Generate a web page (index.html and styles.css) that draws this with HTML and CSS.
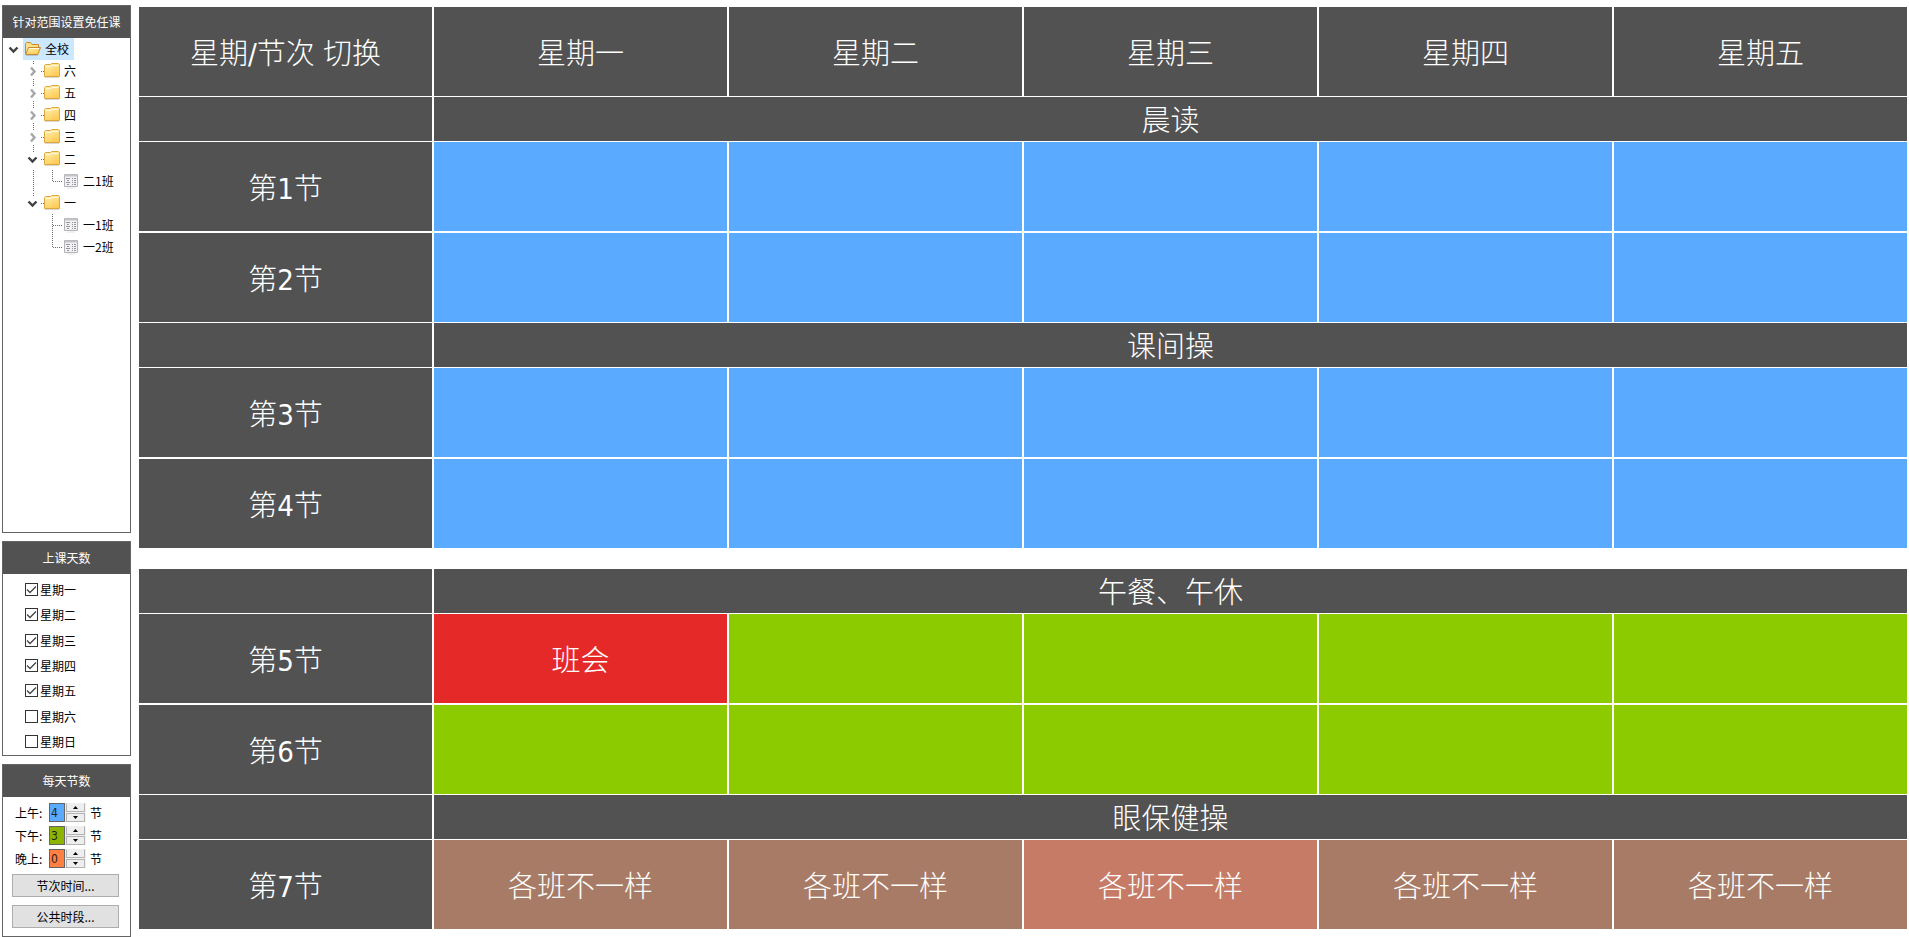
FILE: index.html
```html
<!DOCTYPE html>
<html lang="zh-CN">
<head>
<meta charset="utf-8">
<title>针对范围设置免任课</title>
<link rel="stylesheet" href="styles.css">
</head>
<body>
<svg width="0" height="0" class="defs" aria-hidden="true">
  <defs>
    <linearGradient id="gold" x1="0" y1="0" x2="0.6" y2="1">
      <stop offset="0" stop-color="#fff2b4"/><stop offset="1" stop-color="#ffcb55"/>
    </linearGradient>
    <symbol id="folder" viewBox="0 0 16 16">
      <path d="M.5 13.5V2.5L1.500 1.500H6.500L7.500 .5H14.500L15.500 1.500V13.500Z" fill="url(#gold)" stroke="#dfa83e"/>
      <path d="M1.500 3.500H7L8 2.500H14.500" fill="none" stroke="#fffbe0"/>
      <path d="M1 14.500H15" stroke="#d8d8d8"/>
    </symbol>
    <symbol id="folder-open" viewBox="0 0 16 16">
      <path d="M.5 13V2.500L1.500 1.500H5.500L7 3.500H13.500V6.500" fill="#fbe08a" stroke="#c98b2b"/>
      <path d="M.8 13.500L3.500 6.500H15.500L12.800 13.500Z" fill="url(#gold)" stroke="#c98b2b"/>
      <path d="M4.200 7.500H14" stroke="#fffbe0"/>
      <path d="M1 14.500H13" stroke="#b3c6d8"/>
    </symbol>
    <symbol id="sheet" viewBox="0 0 14 16">
      <path d="M.5 1.500H13.500V13.500H.5Z" fill="#f1f1f3" stroke="#b4b4b8"/>
      <path d="M1 2.500H13" stroke="#c4c4c8" stroke-width="2"/>
      <path d="M2 5.500H6M3 7.500H5M2 9.500H6M3 11.500H5M8 5.500H9M10 5.500H12M8 7.500H9M10 7.500H12M8 9.500H9M10 9.500H12M8 11.500H9M10 11.500H12" stroke="#96969c"/>
      <path d="M3 15H11" stroke="#e2e2e2"/>
    </symbol>
    <symbol id="g-shut" viewBox="0 0 41 22">
      <path d="M28 7.500L31.500 11.500L28 15.500" fill="none" stroke="#a6a6a6" stroke-width="2.400"/>
      <path d="M30.500 1V4M30.500 19V22M38 11.500H41" class="dots"/>
    </symbol>
    <symbol id="g-open" viewBox="0 0 41 22">
      <path d="M25.500 9.500L29.500 13.500L33.500 9.500" fill="none" stroke="#404040" stroke-width="2.400"/>
      <path d="M30.500 1V4M38 11.500H41" class="dots"/>
    </symbol>
    <symbol id="g-mid" viewBox="0 0 61 22">
      <path d="M49.500 0V22M50 11.500H60" class="dots"/>
    </symbol>
    <symbol id="g-last" viewBox="0 0 61 22">
      <path d="M49.500 0V12M50 11.500H60" class="dots"/>
    </symbol>
    <symbol id="g-last-in" viewBox="0 0 61 22">
      <path d="M30.500 0V22M49.500 0V12M50 11.500H60" class="dots"/>
    </symbol>
  </defs>
</svg>
<div class="app">
  <aside class="side">
    <section class="panel grow">
      <h2>针对范围设置免任课</h2>
      <ul class="tree">
        <li class="node">
          <svg class="root-gutter" viewBox="0 0 20 22"><path d="M6.500 9.500L10.500 13.500L14.500 9.500" fill="none" stroke="#404040" stroke-width="2.400"/></svg>
          <span class="selected"><svg class="folder"><use href="#folder-open"/></svg>全校</span>
        </li>
        <li class="node"><svg class="gutter"><use href="#g-shut"/></svg><svg class="folder"><use href="#folder"/></svg>六</li>
        <li class="node"><svg class="gutter"><use href="#g-shut"/></svg><svg class="folder"><use href="#folder"/></svg>五</li>
        <li class="node"><svg class="gutter"><use href="#g-shut"/></svg><svg class="folder"><use href="#folder"/></svg>四</li>
        <li class="node"><svg class="gutter"><use href="#g-shut"/></svg><svg class="folder"><use href="#folder"/></svg>三</li>
        <li class="node"><svg class="gutter"><use href="#g-open"/></svg><svg class="folder"><use href="#folder"/></svg>二</li>
        <li class="node"><svg class="gutter deep"><use href="#g-last-in"/></svg><svg class="sheet"><use href="#sheet"/></svg>二1班</li>
        <li class="node"><svg class="gutter"><use href="#g-open"/></svg><svg class="folder"><use href="#folder"/></svg>一</li>
        <li class="node"><svg class="gutter deep"><use href="#g-mid"/></svg><svg class="sheet"><use href="#sheet"/></svg>一1班</li>
        <li class="node"><svg class="gutter deep"><use href="#g-last"/></svg><svg class="sheet"><use href="#sheet"/></svg>一2班</li>
      </ul>
    </section>
    <section class="panel">
      <h2>上课天数</h2>
      <div class="days">
        <label><input type="checkbox" checked>星期一</label>
        <label><input type="checkbox" checked>星期二</label>
        <label><input type="checkbox" checked>星期三</label>
        <label><input type="checkbox" checked>星期四</label>
        <label><input type="checkbox" checked>星期五</label>
        <label><input type="checkbox">星期六</label>
        <label><input type="checkbox">星期日</label>
      </div>
    </section>
    <section class="panel">
      <h2>每天节数</h2>
      <div class="counts">
        <div class="count"><label for="am">上午:</label><input id="am" class="am" type="text" value="4"><span class="spin"><button type="button" aria-label="上午增加"><svg viewBox="0 0 5 3"><path d="M0 3L2.500 0L5 3Z"/></svg></button><button type="button" aria-label="上午减少"><svg viewBox="0 0 5 3"><path d="M0 0L2.500 3L5 0Z"/></svg></button></span>节</div>
        <div class="count"><label for="pm">下午:</label><input id="pm" class="pm" type="text" value="3"><span class="spin"><button type="button" aria-label="下午增加"><svg viewBox="0 0 5 3"><path d="M0 3L2.500 0L5 3Z"/></svg></button><button type="button" aria-label="下午减少"><svg viewBox="0 0 5 3"><path d="M0 0L2.500 3L5 0Z"/></svg></button></span>节</div>
        <div class="count"><label for="eve">晚上:</label><input id="eve" class="eve" type="text" value="0"><span class="spin"><button type="button" aria-label="晚上增加"><svg viewBox="0 0 5 3"><path d="M0 3L2.500 0L5 3Z"/></svg></button><button type="button" aria-label="晚上减少"><svg viewBox="0 0 5 3"><path d="M0 0L2.500 3L5 0Z"/></svg></button></span>节</div>
      </div>
      <div class="actions">
        <button type="button">节次时间...</button>
        <button type="button">公共时段...</button>
      </div>
    </section>
  </aside>
  <main class="board">
    <table class="timetable">
      <thead>
        <tr class="lesson"><th>星期/节次 切换</th><th>星期一</th><th>星期二</th><th>星期三</th><th>星期四</th><th>星期五</th></tr>
      </thead>
      <tbody class="morning">
        <tr class="band"><th></th><th colspan="5">晨读</th></tr>
        <tr class="lesson"><th>第1节</th><td></td><td></td><td></td><td></td><td></td></tr>
        <tr class="lesson"><th>第2节</th><td></td><td></td><td></td><td></td><td></td></tr>
        <tr class="band"><th></th><th colspan="5">课间操</th></tr>
        <tr class="lesson"><th>第3节</th><td></td><td></td><td></td><td></td><td></td></tr>
        <tr class="lesson"><th>第4节</th><td></td><td></td><td></td><td></td><td></td></tr>
      </tbody>
      <tbody class="afternoon">
        <tr class="band"><th></th><th colspan="5">午餐、午休</th></tr>
        <tr class="lesson"><th>第5节</th><td class="meeting">班会</td><td></td><td></td><td></td><td></td></tr>
        <tr class="lesson"><th>第6节</th><td></td><td></td><td></td><td></td><td></td></tr>
        <tr class="band"><th></th><th colspan="5">眼保健操</th></tr>
        <tr class="lesson"><th>第7节</th><td class="mixed">各班不一样</td><td class="mixed">各班不一样</td><td class="mixed active">各班不一样</td><td class="mixed">各班不一样</td><td class="mixed">各班不一样</td></tr>
      </tbody>
    </table>
  </main>
</div>
</body>
</html>
```
FILE: styles.css
```css
* { box-sizing: border-box; }

body {
  margin: 0;
  background: #fff;
  color: #000;
  font: 12px/22px "Noto Sans CJK SC", sans-serif;
}

.defs { position: absolute; }

.dots {
  fill: none;
  stroke: #6e6e6e;
  stroke-dasharray: 1 1;
}

.app {
  display: flex;
  gap: 6px;
  min-height: 100vh;
  padding-right: 2px;
}

.side {
  display: flex;
  flex: 0 0 131px;
  flex-direction: column;
  gap: 8px;
  padding: 5px 0 0 2px;
}

.panel { border: 1px solid #646464; }
.grow { flex: 1; }

.panel h2 {
  margin: 0;
  background: #525252;
  color: #fff;
  font-size: 12px;
  font-weight: 400;
  line-height: 32px;
  text-align: center;
}

.tree {
  margin: 0;
  padding: 0;
  list-style: none;
}

.node {
  display: flex;
  align-items: center;
  height: 22px;
}

.root-gutter { width: 20px; height: 22px; }
.gutter { width: 41px; height: 22px; }
.deep { width: 61px; }
.folder { width: 16px; height: 16px; margin-right: 4px; }
.sheet { width: 14px; height: 16px; margin-right: 5px; }

.selected {
  display: flex;
  align-items: center;
  padding: 0 5px 0 2px;
  background: #cce8ff;
}

.days {
  display: flex;
  flex-direction: column;
  justify-content: space-between;
  height: 165px;
  margin: 9px 0 7px 22px;
}

.days label {
  display: flex;
  align-items: center;
  gap: 2px;
  line-height: 13px;
}

.days input {
  width: 13px;
  height: 13px;
  margin: 0;
  border: 1px solid #333;
  background: #fff;
  appearance: none;
}

.days input:checked {
  background: #fff url("data:image/svg+xml,%3Csvg xmlns='http://www.w3.org/2000/svg' viewBox='0 0 11 11'%3E%3Cpath d='M1 5.500L4 8.500L10 2.500' fill='none' stroke='%23444' stroke-width='1.300'/%3E%3C/svg%3E");
}

.counts {
  display: flex;
  flex-direction: column;
  gap: 4px;
  padding: 6px 0 6px 12px;
}

.count {
  display: flex;
  align-items: center;
  height: 19px;
  line-height: 19px;
}

.count label { width: 34px; }

.count input {
  width: 16px;
  height: 19px;
  margin: 0;
  padding: 0 1px;
  border: 1px solid #646464;
  border-radius: 0;
  color: #222;
  font: 12px/17px "DejaVu Sans Condensed", "DejaVu Sans", sans-serif;
}

.count .am { background: #5aaaff; }
.count .pm { background: #8cb400; }
.count .eve { background: #ff8040; }

.spin {
  display: flex;
  flex-direction: column;
  gap: 1px;
  width: 21px;
  height: 19px;
  margin-right: 4px;
  padding: 0 1px;
  background: #f0f0f0;
}

.spin button {
  display: flex;
  flex: 1;
  align-items: center;
  justify-content: center;
  margin: 0;
  padding: 0;
  border: 1px solid #b4b4b4;
  background: #eee;
}

.spin button:first-child { border-top-color: #eee; }

.spin svg { width: 5px; height: 3px; }

.actions {
  display: flex;
  flex-direction: column;
  gap: 8px;
  padding: 0 11px 8px 9px;
}

.actions button {
  height: 23px;
  padding: 0;
  border: 1px solid #adadad;
  background: #e1e1e1;
  color: #000;
  font: 12px/21px "Noto Sans CJK SC", sans-serif;
}

.board { flex: 1; padding-top: 7px; }

.timetable {
  width: 100%;
  border-collapse: separate;
  border-spacing: 0;
  table-layout: fixed;
  color: #fff;
  font-family: "DejaVu Sans Condensed", "Noto Sans CJK SC", sans-serif;
  font-size: 29px;
  line-height: 40px;
}

.timetable th,
.timetable td {
  box-sizing: content-box;
  padding: 4px 0 0;
  border: 0 solid #fff;
  border-width: 0 0 1px 2px;
  font-weight: 300;
  text-align: center;
}

.timetable th { background: #525252; }
.timetable .lesson th,
.timetable .lesson td { height: 85px; }
.timetable .band th { height: 40px; }

.timetable .lesson + .lesson th,
.timetable .lesson + .lesson td { border-top-width: 1px; }

.timetable .afternoon .band:first-child th { border-top-width: 20px; }

.morning td { background: #5aaaff; }
.afternoon td { background: #8ccb00; }
.afternoon .meeting { background: #e52929; }
.afternoon .mixed { background: #a87b66; }
.afternoon .active { background: #c67b66; }
```
